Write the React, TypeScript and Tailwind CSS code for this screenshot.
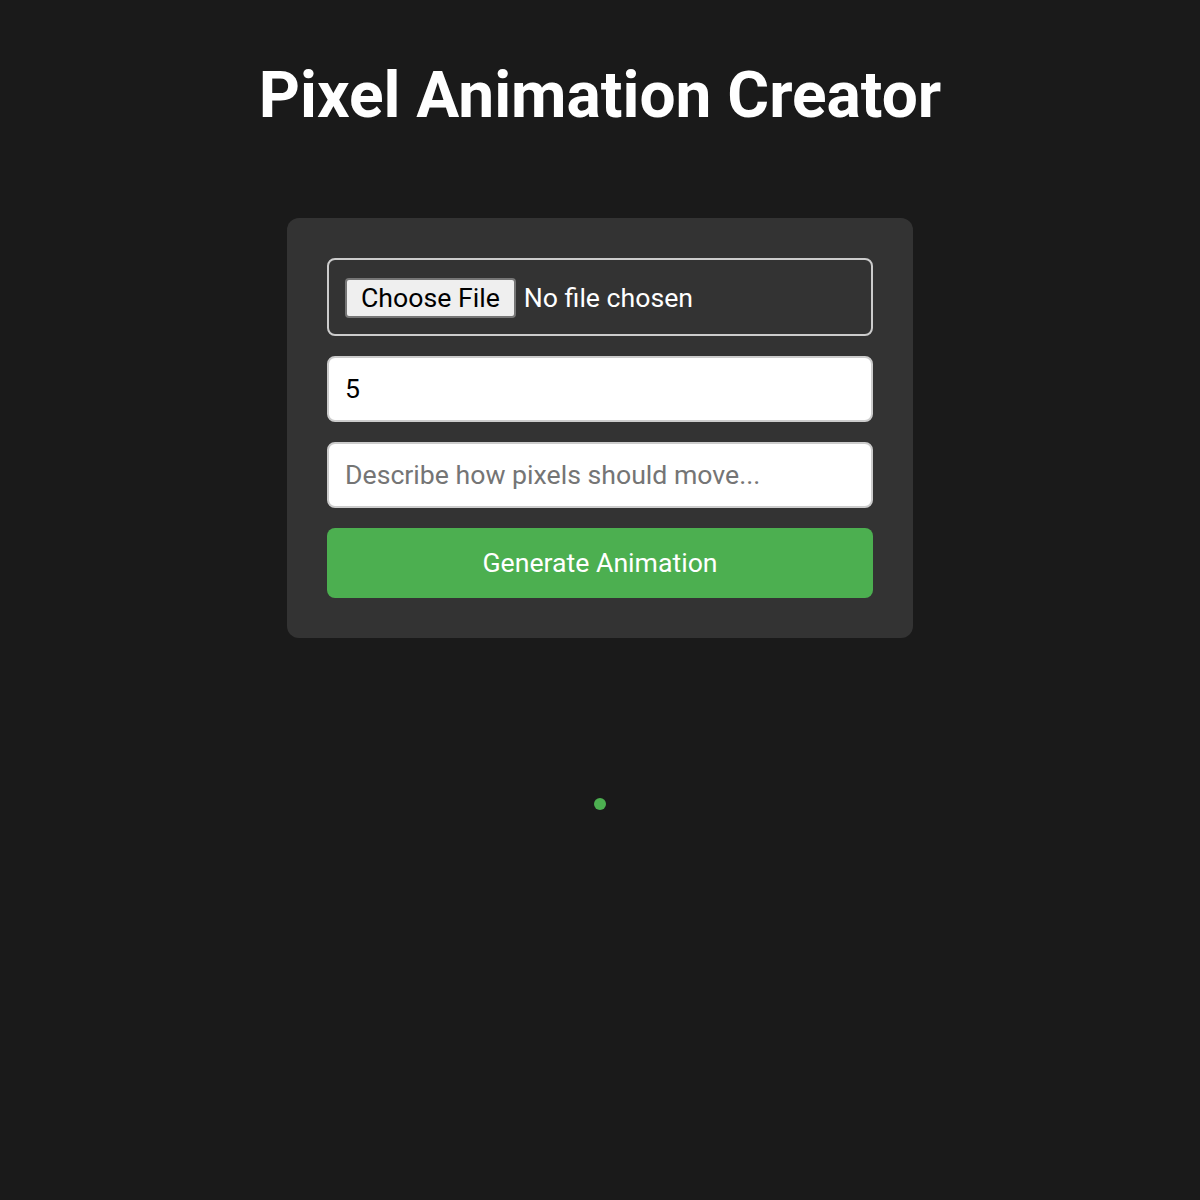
import { useState } from "react";

export default function App() {
  const [frames, setFrames] = useState("5");
  const [prompt, setPrompt] = useState("");

  return (
    <div className="min-h-screen bg-[#1a1a1a] flex flex-col items-center font-['Roboto',sans-serif] text-white">
      <h1 className="mt-[56px] text-[64px] leading-[80px] font-bold">Pixel Animation Creator</h1>

      {/* Form card */}
      <div className="mt-[82px] w-[626px] rounded-xl bg-[#333333] p-10 flex flex-col gap-5">
        <input
          type="file"
          className="h-[78px] w-full rounded-lg border-2 border-[#cccccc] px-4 pt-[18px] pb-[16px] text-[26.67px] leading-[34px] text-white file:mr-2 file:h-10 file:rounded file:border-2 file:border-[#767676] file:bg-[#efefef] file:px-[14px] file:text-[26.67px] file:leading-[34px] file:text-black"
        />
        <input
          type="number"
          value={frames}
          onChange={(e) => setFrames(e.target.value)}
          className="h-[66px] w-full rounded-lg border-2 border-[#cccccc] bg-white px-4 text-[26.67px] text-black outline-none"
        />
        <input
          type="text"
          value={prompt}
          onChange={(e) => setPrompt(e.target.value)}
          placeholder="Describe how pixels should move..."
          className="h-[66px] w-full rounded-lg border-2 border-[#cccccc] bg-white px-4 text-[26.67px] text-black placeholder:text-[#757575] outline-none"
        />
        <button className="h-[70px] w-full rounded-lg bg-[#4caf50] text-[26.67px] text-white">
          Generate Animation
        </button>
      </div>

      {/* Output preview */}
      <div className="mt-[160px] h-3 w-3 rounded-full bg-[#4caf50]" />
    </div>
  );
}
